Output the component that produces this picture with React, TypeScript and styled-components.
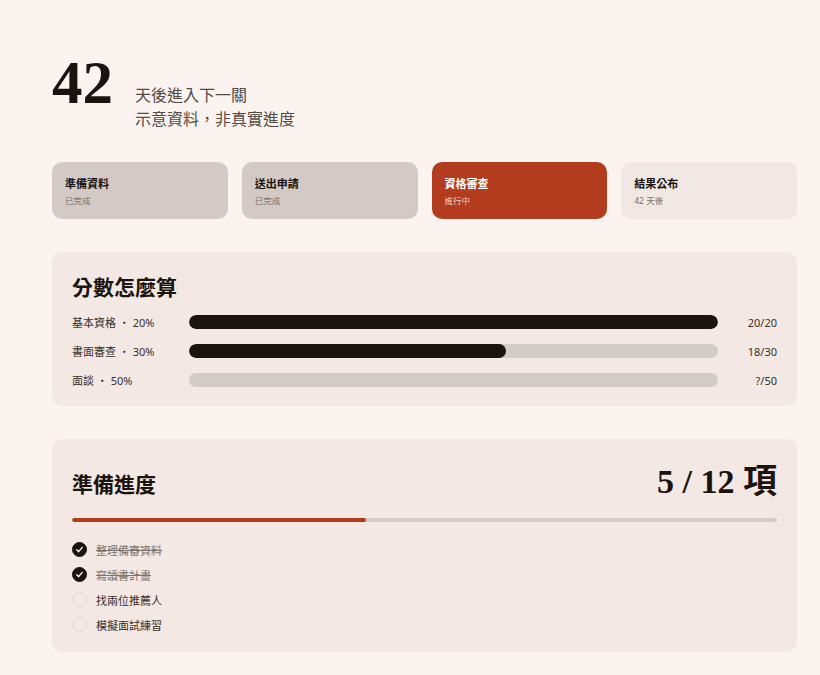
import React from 'react'
import styled, { createGlobalStyle } from 'styled-components'

const GlobalStyle = createGlobalStyle`
  html, body {
    margin: 0;
    padding: 0;
    background: #faf3ef;
  }
  body {
    font-family: "Noto Sans", "Noto Sans CJK TC", sans-serif;
    color: #1b1310;
  }
`

const SERIF = `"Liberation Serif", "Noto Sans CJK TC", serif`

const colors = {
  ink: '#1b1310',
  muted: '#7a6e69',
  accent: '#b33b1e',
  done: '#d3cac5',
  future: '#f2e8e3',
  panel: '#f3e8e3',
  track: '#d3cbc6',
}

const Page = styled.div`
  width: 745px;
  padding: 52px 0 40px 52px;
`

const Hero = styled.div`
  display: flex;
  align-items: flex-start;
  gap: 22px;
`

const BigNumber = styled.div`
  font-family: ${SERIF};
  font-weight: 700;
  font-size: 61px;
  line-height: 1;
  color: ${colors.ink};
`

const HeroText = styled.div`
  padding-top: 31px;
  font-size: 16px;
  line-height: 24px;
  color: #554a45;
`

const Stages = styled.div`
  display: grid;
  grid-template-columns: repeat(4, 1fr);
  gap: 14px;
  margin-top: 31px;
`

type StageState = 'done' | 'active' | 'future'

const StageCard = styled.div<{ $state: StageState }>`
  height: 57px;
  box-sizing: border-box;
  padding: 2px 13px 0;
  border-radius: 10px;
  display: flex;
  flex-direction: column;
  justify-content: center;
  gap: 3px;
  background: ${p => (p.$state === 'done' ? colors.done : p.$state === 'active' ? colors.accent : colors.future)};
  color: ${p => (p.$state === 'active' ? '#fff' : colors.ink)};
`

const StageTitle = styled.div`
  font-size: 11px;
  line-height: 16px;
  font-weight: 700;
`

const StageSub = styled.div<{ $active?: boolean }>`
  font-size: 8.5px;
  line-height: 12px;
  color: ${p => (p.$active ? '#f0cdc2' : colors.muted)};
`

const Panel = styled.section<{ $top?: number; $bottom?: number }>`
  margin-top: 33px;
  background: ${colors.panel};
  border-radius: 10px;
  padding: ${p => p.$top ?? 22}px 20px ${p => p.$bottom ?? 20}px 20px;
`

const PanelTitle = styled.h2`
  margin: 0;
  font-family: ${SERIF};
  font-weight: 700;
  font-size: 21px;
  line-height: 28px;
  color: ${colors.ink};
`

const ScoreRows = styled.div`
  display: flex;
  flex-direction: column;
  gap: 15px;
  margin-top: 12px;
`

const ScoreRow = styled.div`
  display: grid;
  grid-template-columns: 117px 1fr 59px;
  align-items: center;
  height: 14px;
`

const ScoreLabel = styled.div`
  font-size: 11px;
  color: #3a302c;
  white-space: nowrap;
`

const Track = styled.div<{ $h: number }>`
  height: ${p => p.$h}px;
  border-radius: ${p => p.$h}px;
  background: ${colors.track};
  overflow: hidden;
`

const Fill = styled.div<{ $color: string }>`
  height: 100%;
  border-radius: inherit;
  background: ${p => p.$color};
`

const ScoreValue = styled.div`
  font-size: 11px;
  color: #3a302c;
  text-align: right;
`

const Header = styled.div`
  display: flex;
  justify-content: space-between;
  align-items: center;
  height: 40px;
`

const Count = styled.div`
  font-family: ${SERIF};
  font-weight: 700;
  font-size: 34px;
  line-height: 40px;
  color: ${colors.ink};
  margin-top: -6px;
`

const ProgressWrap = styled.div`
  margin-top: 13px;
`

const Checklist = styled.ul`
  list-style: none;
  margin: 15px 0 0;
  padding: 0;
`

const CheckItem = styled.li<{ $done: boolean }>`
  display: flex;
  align-items: center;
  gap: 9px;
  height: 25px;
  font-size: 11px;
  color: ${p => (p.$done ? '#7d726d' : '#3a302c')};
  text-decoration: ${p => (p.$done ? 'line-through' : 'none')};
`

const Circle = styled.span<{ $done: boolean }>`
  width: 15px;
  height: 15px;
  box-sizing: border-box;
  border-radius: 50%;
  flex: none;
  display: flex;
  align-items: center;
  justify-content: center;
  background: ${p => (p.$done ? colors.ink : 'transparent')};
  border: 1px solid ${p => (p.$done ? colors.ink : '#e2d7d2')};
`

const stages: { title: string; sub: string; state: StageState }[] = [
  { title: '準備資料', sub: '已完成', state: 'done' },
  { title: '送出申請', sub: '已完成', state: 'done' },
  { title: '資格審查', sub: '進行中', state: 'active' },
  { title: '結果公布', sub: '42 天後', state: 'future' },
]

const scores = [
  { label: '基本資格 ・ 20%', got: 20, max: 20, value: '20/20' },
  { label: '書面審查 ・ 30%', got: 18, max: 30, value: '18/30' },
  { label: '面談 ・ 50%', got: 0, max: 50, value: '?/50' },
]

const tasks = [
  { text: '整理備審資料', done: true },
  { text: '寫讀書計畫', done: true },
  { text: '找兩位推薦人', done: false },
  { text: '模擬面試練習', done: false },
]

const Check = () => (
  <svg width="9" height="9" viewBox="0 0 10 10" fill="none">
    <path d="M2 5.3 L4.1 7.4 L8 2.6" stroke="#fff" strokeWidth="1.5" strokeLinecap="round" strokeLinejoin="round" />
  </svg>
)

export default function App() {
  const doneCount = 5
  const total = 12
  return (
    <>
      <GlobalStyle />
      <Page>
        <Hero>
          <BigNumber>42</BigNumber>
          <HeroText>
            <div>天後進入下一關</div>
            <div>示意資料，非真實進度</div>
          </HeroText>
        </Hero>

        <Stages>
          {stages.map(s => (
            <StageCard key={s.title} $state={s.state}>
              <StageTitle>{s.title}</StageTitle>
              <StageSub $active={s.state === 'active'}>{s.sub}</StageSub>
            </StageCard>
          ))}
        </Stages>

        <Panel>
          <PanelTitle>分數怎麼算</PanelTitle>
          <ScoreRows>
            {scores.map(s => (
              <ScoreRow key={s.label}>
                <ScoreLabel>{s.label}</ScoreLabel>
                <Track $h={14}>
                  <Fill $color={colors.ink} style={{ width: `${(s.got / s.max) * 100}%` }} />
                </Track>
                <ScoreValue>{s.value}</ScoreValue>
              </ScoreRow>
            ))}
          </ScoreRows>
        </Panel>

        <Panel $top={26} $bottom={15}>
          <Header>
            <PanelTitle>準備進度</PanelTitle>
            <Count>
              {doneCount} / {total} 項
            </Count>
          </Header>
          <ProgressWrap>
            <Track $h={4}>
              <Fill $color={colors.accent} style={{ width: `${(doneCount / total) * 100}%` }} />
            </Track>
          </ProgressWrap>
          <Checklist>
            {tasks.map(t => (
              <CheckItem key={t.text} $done={t.done}>
                <Circle $done={t.done}>{t.done && <Check />}</Circle>
                <span>{t.text}</span>
              </CheckItem>
            ))}
          </Checklist>
        </Panel>
      </Page>
    </>
  )
}
